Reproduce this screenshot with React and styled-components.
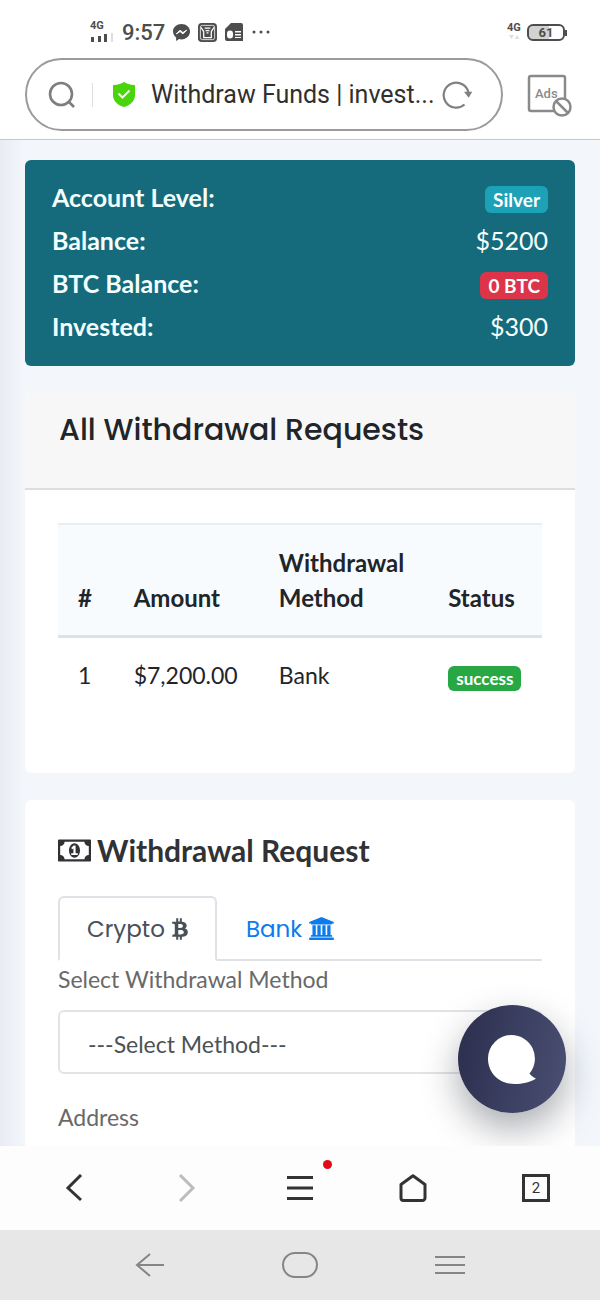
import React from "react";
import styled, { createGlobalStyle } from "styled-components";
import { FaBtc } from "react-icons/fa";

const lato = `Lato, "Liberation Sans", sans-serif`;
const poppins = `Poppins, Inter, "Liberation Sans", sans-serif`;
const roboto = `Roboto, "Liberation Sans", sans-serif`;

const GlobalStyle = createGlobalStyle`
  *, *::before, *::after { box-sizing: border-box; }
  body { margin: 0; font-family: ${lato}; color: #212529; background: #fff; }
  button, input, select { font: inherit; color: inherit; margin: 0; }
  button { border: 0; padding: 0; background: none; cursor: pointer; }
  svg { display: block; flex: none; }
`;

const Screen = styled.div`
  display: flex;
  flex-direction: column;
  height: 100vh;
  overflow: hidden;
`;

/* Phone status bar */
const StatusBar = styled.div`
  display: flex;
  align-items: center;
  justify-content: space-between;
  height: 58px;
  padding: 6px 35px 0 90px;
  color: #4d4d4d;
  font-family: ${roboto};
  flex: none;
`;
const StatusGroup = styled.div`
  display: flex;
  align-items: center;
  gap: ${(p) => p.$gap}px;
`;
const Signal = styled.div`
  display: flex;
  flex-direction: column;
  align-items: flex-start;
  gap: 2px;
  padding-bottom: 2px;
  font-size: 11px;
  line-height: 10px;
  font-weight: 700;
`;
const Clock = styled.span`
  padding-top: 1px;
  font-size: 22px;
  line-height: 28px;
  font-weight: 500;
`;
const Battery = styled.div`
  position: relative;
  width: 38px;
  height: 17px;
  border: 2px solid #4d4d4d;
  border-radius: 6px;
  background: linear-gradient(90deg, #d2d2d2 58%, #fff 58%);
  font-size: 13px;
  line-height: 13px;
  font-weight: 700;
  text-align: center;
  &::after {
    content: "";
    position: absolute;
    right: -4px;
    top: 4px;
    width: 2px;
    height: 6px;
    background: #4d4d4d;
  }
`;

/* Browser address bar */
const AddressRow = styled.header`
  display: flex;
  align-items: center;
  gap: 24px;
  height: 82px;
  padding: 0 27px 9px 25px;
  border-bottom: 1px solid #c3c7cc;
  flex: none;
`;
const AddressBox = styled.div`
  display: flex;
  align-items: center;
  flex: 1;
  min-width: 0;
  height: 73px;
  padding: 1px 29px 0 20px;
  border: 2px solid #9c9a9a;
  border-radius: 37px;
`;
const Divider = styled.span`
  width: 1px;
  height: 24px;
  margin: 0 19px 0 15px;
  background: #dedede;
`;
const AddressInput = styled.input`
  flex: 1;
  min-width: 0;
  padding: 1px 0 0 15px;
  border: 0;
  outline: 0;
  background: none;
  color: #303030;
  font-family: ${roboto};
  font-size: 25px;
  line-height: 32px;
`;

/* Web page */
const Viewport = styled.div`
  position: relative;
  flex: 1;
  min-height: 0;
  overflow: hidden;
`;
const Page = styled.main`
  display: flex;
  flex-direction: column;
  gap: 27px;
  height: 100%;
  padding: 20px 25px 0;
  overflow-y: auto;
  scrollbar-width: none;
  background: linear-gradient(90deg, #e9edf3 0, #f3f7fc 25px, #f3f7fc 100%);
`;
const Summary = styled.dl`
  margin: 0;
  padding: 15px 27px 19px;
  border-radius: 6px;
  background: #156a7c;
  color: #f4ffff;
  flex: none;
`;
const SummaryRow = styled.div`
  display: flex;
  align-items: center;
  justify-content: space-between;
  height: 43px;
  font-size: 25px;
  line-height: 30px;
  dt { font-weight: 700; }
  dd { margin: 0; }
`;
const Badge = styled.span`
  display: block;
  width: fit-content;
  margin-top: 5px;
  padding: 0 8px;
  border-radius: 6px;
  background: ${(p) => p.$color};
  color: #fff;
  font-size: ${(p) => (p.$small ? 17 : 19)}px;
  line-height: ${(p) => (p.$small ? 25 : 27)}px;
  font-weight: 700;
`;
const Card = styled.section`
  border-radius: 6px;
  background: #fff;
  flex: none;
`;
const CardHeader = styled.div`
  height: 97px;
  padding: 18px 34px;
  border-bottom: 2px solid #dcdddf;
  border-radius: 6px 6px 0 0;
  background: #f7f7f7;
`;
const CardTitle = styled.h2`
  margin: 0;
  font-family: ${poppins};
  font-size: 30px;
  line-height: 38px;
  font-weight: 500;
`;
const CardBody = styled.div`
  padding: ${(p) => p.$pad};
`;
const Table = styled.table`
  width: 100%;
  table-layout: fixed;
  border-collapse: collapse;
  font-size: 24px;
  line-height: 35px;
  th, td { padding: 20px 0 20px 20px; text-align: left; }
  td { padding-bottom: 24px; font-size: 23px; }
  th {
    border-top: 2px solid #e9edf0;
    border-bottom: 3px solid #dbe1e6;
    background: #f8fbfe;
    font-weight: 700;
    vertical-align: bottom;
  }
`;
const Col = styled.col`
  width: ${(p) => p.$w};
`;
const FormTitle = styled.h3`
  display: flex;
  align-items: center;
  gap: 6px;
  margin: 0 0 28px;
  color: #303235;
  font-size: 30px;
  line-height: 36px;
  font-weight: 700;
`;
const Tabs = styled.div`
  display: flex;
  height: 65px;
  border-bottom: 2px solid #dee2e6;
`;
const Tab = styled.button`
  display: flex;
  align-items: center;
  gap: 7px;
  height: 65px;
  padding: 0 27px;
  border: 2px solid ${(p) => (p.$active ? "#dee2e6" : "transparent")};
  border-bottom-color: ${(p) => (p.$active ? "#fff" : "transparent")};
  border-radius: 6px 6px 0 0;
  color: ${(p) => (p.$active ? "#495057" : "#0b7bee")};
  font-family: ${poppins};
  font-size: 23px;
`;
const BitcoinIcon = styled(FaBtc)`
  width: 16px;
  height: 22px;
`;
const Label = styled.label`
  display: block;
  padding: 3px 0 16px;
  color: #696969;
  font-size: 23px;
  line-height: 30px;
`;
const fieldStyle = `
  display: block;
  width: 100%;
  height: 64px;
  margin-bottom: 25px;
  padding: 4px 28px 0;
  border: 2px solid #e1e4e7;
  border-radius: 6px;
  background: #fff;
  color: #4c5257;
  font-size: 23px;
  appearance: none;
`;
const Select = styled.select`
  && { ${fieldStyle} }
`;
const TextField = styled.input`
  && { ${fieldStyle} }
`;
const ChatButton = styled.button`
  position: absolute;
  right: 34px;
  bottom: 33px;
  display: grid;
  place-items: center;
  width: 108px;
  height: 108px;
  border-radius: 50%;
  background: linear-gradient(100deg, #2e3150 10%, #474c70 90%);
  box-shadow: 0 16px 36px rgba(20, 26, 38, 0.36);
`;

/* Browser toolbar and phone navigation */
const Toolbar = styled.nav`
  display: flex;
  align-items: center;
  justify-content: space-between;
  height: 84px;
  padding: 0 38px;
  background: #fdfdfd;
  color: #333;
  flex: none;
`;
const SystemBar = styled.nav`
  display: flex;
  align-items: center;
  justify-content: space-between;
  height: 70px;
  padding: 0 19%;
  background: #e7e7e7;
  color: #858585;
  flex: none;
`;
const NavButton = styled.button`
  position: relative;
  display: grid;
  align-items: center;
  justify-items: ${(p) => (p.$end ? "end" : "center")};
  width: ${(p) => p.$w || 72}px;
  height: 56px;
  padding-right: ${(p) => (p.$end ? 12 : 0)}px;
`;
const Dot = styled.span`
  position: absolute;
  top: 0;
  right: 4px;
  width: 9px;
  height: 9px;
  border-radius: 50%;
  background: #e20a17;
`;
const TabCount = styled.span`
  width: 28px;
  height: 28px;
  border: 3px solid #333;
  font-family: ${roboto};
  font-size: 15px;
  line-height: 22px;
  text-align: center;
`;

const Line = ({ w, h, sw = 3, color = "currentColor", children }) => (
  <svg width={w} height={h} viewBox={`0 0 ${w} ${h}`} fill="none" stroke={color} strokeWidth={sw} aria-hidden="true">
    {children}
  </svg>
);

const MoneyIcon = () => (
  <svg width="33" height="31" viewBox="0 0 1920 1792" fill="currentColor" fillRule="evenodd" aria-hidden="true">
    <path d="M768 1152h384v-96h-128v-448h-114l-148 137 77 80q42-37 55-57h2v288h-128v96zm512-256q0 70-21 142t-59.5 134-101.5 101-138 39-138-39-101.5-101-59.5-134-21-142 21-142 59.5-134 101.5-101 138-39 138 39 101.5 101 59.5 134 21 142zm512 256v-512q-106 0-181-75t-75-181h-1152q0 106-75 181t-181 75v512q106 0 181 75t75 181h1152q0-106 75-181t181-75zm128-832v1152q0 26-19 45t-45 19h-1792q-26 0-45-19t-19-45v-1152q0-26 19-45t45-19h1792q26 0 45 19t19 45z" />
  </svg>
);

const BankIcon = () => (
  <svg width="25" height="23" viewBox="0 0 1920 1792" fill="currentColor" aria-hidden="true">
    <path d="M960 0l960 384v128h-128q0 26-20.5 45t-48.5 19h-1526q-28 0-48.5-19t-20.5-45h-128v-128zm-704 640h256v768h128v-768h256v768h128v-768h256v768h128v-768h256v768h59q28 0 48.5 19t20.5 45v64h-1664v-64q0-26 20.5-45t48.5-19h59v-768zm1595 960q28 0 48.5 19t20.5 45v128h-1920v-128q0-26 20.5-45t48.5-19h1782z" />
  </svg>
);

const summary = [
  { label: "Account Level:", value: "Silver", badge: "#1ca1b6" },
  { label: "Balance:", value: "$5200" },
  { label: "BTC Balance:", value: "0 BTC", badge: "#dc3549" },
  { label: "Invested:", value: "$300" },
];

const requests = [{ id: 1, amount: "$7,200.00", method: "Bank", status: "success" }];

function PhoneStatus() {
  return (
    <StatusBar>
      <StatusGroup $gap={8}>
        <Signal>
          <span>4G</span>
          <svg width="24" height="9" viewBox="0 0 24 9" fill="#4d4d4d" aria-hidden="true">
            <path d="M1 4h3v5H1zM8 3h3v6H8zM14 1h3v8h-3z" />
            <path d="M21 0h2v9h-2z" fill="#dedede" />
          </svg>
        </Signal>
        <Clock>9:57</Clock>
        <svg width="17" height="17" viewBox="0 0 18 18" aria-hidden="true">
          <path d="M9 0C4 0 0 3.600 0 8c0 2.600 1.300 4.700 3.300 6.200V18l3.200-2c.8.200 1.600.300 2.500.300 5 0 9-3.700 9-8.300S14 0 9 0z" fill="#4d4d4d" />
          <path d="M3.500 10.500 7.500 6.500l3 2.600 4-2.600-4 4-3-2.500z" fill="#fff" stroke="#fff" />
        </svg>
        <svg width="19" height="19" viewBox="0 0 20 20" fill="none" aria-hidden="true">
          <rect width="20" height="20" rx="4" fill="#4d4d4d" />
          <rect x="2.500" y="2.500" width="15" height="15" rx="2" stroke="#ddd" />
          <path d="M3 4.500 6 9v6.500h8V9l3-4.500M6 15.500h8" stroke="#fff" strokeWidth="1.300" />
          <path d="M7 5.500h6M8 8h4M9 10.500h2" stroke="#fff" strokeWidth="1.300" />
        </svg>
        <svg width="18" height="18" viewBox="0 0 18 18" aria-hidden="true">
          <path d="M6 0h10a2 2 0 0 1 2 2v16H2a2 2 0 0 1-2-2V6z" fill="#4d4d4d" />
          <path d="M2 10.500a3 3 0 1 1 6 0v2a3 3 0 0 1-6 0zM10 8h6v1.500h-6zM10 11h6v1.500h-6zM10 14h6v1h-6z" fill="#fff" />
        </svg>
        <svg width="20" height="4" viewBox="0 0 20 4" fill="#4d4d4d" aria-hidden="true">
          <circle cx="3" cy="2" r="1.500" /><circle cx="10" cy="2" r="1.500" /><circle cx="17" cy="2" r="1.500" />
        </svg>
      </StatusGroup>
      <StatusGroup $gap={6}>
        <Signal>
          <span>4G</span>
          <svg width="14" height="4" viewBox="0 0 14 4" fill="#dcdcdc" aria-hidden="true">
            <path d="M2 0h5L4.500 4zM8 4h4l-2-4z" />
          </svg>
        </Signal>
        <Battery>61</Battery>
      </StatusGroup>
    </StatusBar>
  );
}

function AddressBar() {
  return (
    <AddressRow>
      <AddressBox>
        <Line w={30} h={30} sw={2.6} color="#7e7e7e">
          <circle cx="14" cy="14" r="11" /><path d="m21.500 21.500 5.500 5.500" />
        </Line>
        <Divider />
        <svg width="24" height="27" viewBox="0 0 24 27" aria-hidden="true">
          <path d="M12 1c3 2 7 3 10 3 .7 0 1 .4 1 1v9c0 6-4.500 10-11 12C5.500 24 1 20 1 14V5c0-.6.3-1 1-1 3 0 7-1 10-3z" fill="#49d40c" />
          <path d="m6.500 12.500 4 4 7-7" fill="none" stroke="#e9ffe0" strokeWidth="2" />
        </svg>
        <AddressInput aria-label="Page address" readOnly value="Withdraw Funds | invest..." />
        <NavButton type="button" $w={30} aria-label="Reload">
          <Line w={30} h={30} sw={2.2} color="#808080">
            <path d="M22.500 24.500A12.500 12.500 0 1 1 26.500 13" />
            <path d="M23.500 12.500h5.500l-2.400 4z" fill="#808080" strokeWidth="1.500" />
          </Line>
        </NavButton>
      </AddressBox>
      <button type="button" aria-label="Ads blocked">
        <svg width="46" height="46" viewBox="0 0 46 46" fill="none" stroke="#8a8a8a" strokeWidth="2.500" aria-hidden="true">
          <path d="M27 40H4a2 2 0 0 1-2-2V7a2 2 0 0 1 2-2h32a2 2 0 0 1 2 2v21" />
          <text x="8" y="27" fill="#8a8a8a" stroke="none" fontFamily="Roboto, sans-serif" fontSize="13" fontWeight="500">Ads</text>
          <circle cx="35" cy="36" r="8.500" fill="#fff" />
          <path d="m29 30 12 12" />
        </svg>
      </button>
    </AddressRow>
  );
}

export default function App() {
  return (
    <Screen>
      <GlobalStyle />
      <PhoneStatus />
      <AddressBar />
      <Viewport>
        <Page>
          <Summary>
            {summary.map((row) => (
              <SummaryRow key={row.label}>
                <dt>{row.label}</dt>
                <dd>{row.badge ? <Badge $color={row.badge}>{row.value}</Badge> : row.value}</dd>
              </SummaryRow>
            ))}
          </Summary>

          <Card>
            <CardHeader>
              <CardTitle>All Withdrawal Requests</CardTitle>
            </CardHeader>
            <CardBody $pad="33px 33px 56px">
              <Table>
                <colgroup>
                  <Col $w="11.5%" /><Col $w="30%" /><Col $w="35%" /><Col $w="23.5%" />
                </colgroup>
                <thead>
                  <tr>
                    <th scope="col">#</th>
                    <th scope="col">Amount</th>
                    <th scope="col">Withdrawal Method</th>
                    <th scope="col">Status</th>
                  </tr>
                </thead>
                <tbody>
                  {requests.map((r) => (
                    <tr key={r.id}>
                      <td>{r.id}</td>
                      <td>{r.amount}</td>
                      <td>{r.method}</td>
                      <td><Badge $small $color="#28a745">{r.status}</Badge></td>
                    </tr>
                  ))}
                </tbody>
              </Table>
            </CardBody>
          </Card>

          <Card>
            <CardBody $pad="32px 33px 34px">
              <FormTitle><MoneyIcon />Withdrawal Request</FormTitle>
              <Tabs role="tablist">
                <Tab type="button" role="tab" aria-selected="true" $active>Crypto <BitcoinIcon /></Tab>
                <Tab type="button" role="tab" aria-selected="false">Bank <BankIcon /></Tab>
              </Tabs>
              <Label htmlFor="method">Select Withdrawal Method</Label>
              <Select id="method" defaultValue="">
                <option value="">---Select Method---</option>
              </Select>
              <Label htmlFor="address">Address</Label>
              <TextField id="address" type="text" />
            </CardBody>
          </Card>
        </Page>
        <ChatButton type="button" aria-label="Open chat">
          <svg width="50" height="50" viewBox="0 0 50 50" fill="#fff" aria-hidden="true">
            <path d="M24.500 1a23.500 23.500 0 0 1 18 38.500c1.500 2 3.500 3.800 6.500 5C43 48.500 35 50 28 50 12 50 1 39 1 24.500A23.500 23.500 0 0 1 24.500 1z" />
          </svg>
        </ChatButton>
      </Viewport>
      <Toolbar aria-label="Browser">
        <NavButton type="button" aria-label="Back">
          <Line w={18} h={28}><path d="M16 1 3 14l13 12" /></Line>
        </NavButton>
        <NavButton type="button" aria-label="Forward">
          <Line w={18} h={28} color="#bdbdbd"><path d="m2 1 13 13L2 27" /></Line>
        </NavButton>
        <NavButton type="button" aria-label="Menu">
          <Line w={28} h={26}><path d="M1 2.500h26M1 13h26M1 23.500h26" /></Line>
          <Dot />
        </NavButton>
        <NavButton type="button" aria-label="Home">
          <Line w={28} h={28}><path d="M2 10.500 14 1.800l12 8.700V24a2.500 2.500 0 0 1-2.500 2.500h-19A2.500 2.500 0 0 1 2 24z" strokeLinejoin="round" /></Line>
        </NavButton>
        <NavButton type="button" aria-label="Open tabs" $end><TabCount>2</TabCount></NavButton>
      </Toolbar>
      <SystemBar aria-label="System">
        <NavButton type="button" aria-label="System back">
          <Line w={30} h={24} sw={2}><path d="M15 1 2 12l13 11M2 12h27" /></Line>
        </NavButton>
        <NavButton type="button" aria-label="System home">
          <Line w={36} h={26} sw={2}><rect x="1" y="1" width="34" height="24" rx="12" /></Line>
        </NavButton>
        <NavButton type="button" aria-label="Recent apps">
          <Line w={30} h={20} sw={2}><path d="M0 2h30M0 10h30M0 18h30" /></Line>
        </NavButton>
      </SystemBar>
    </Screen>
  );
}
